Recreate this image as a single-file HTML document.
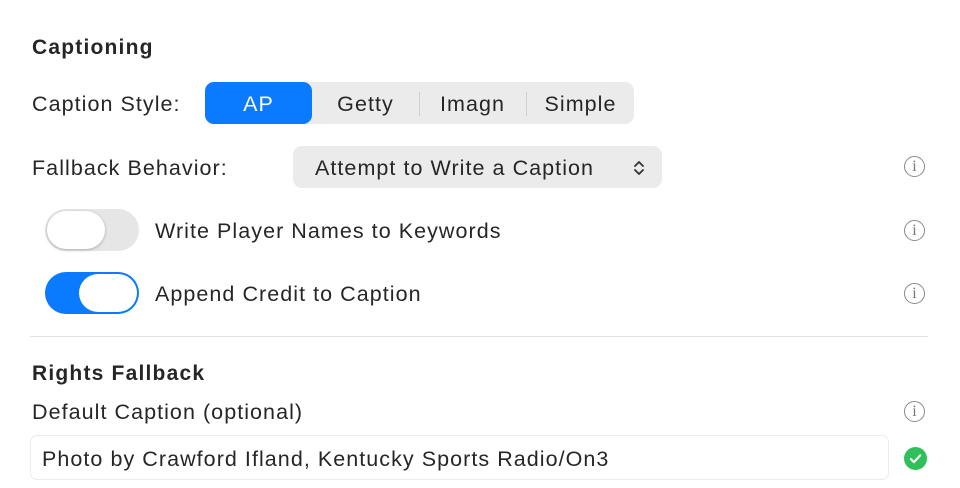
<!DOCTYPE html><html><head><meta charset="utf-8"><style>
body{margin:0;width:960px;height:488px;background:#fff;font-family:"Liberation Sans",sans-serif;color:#262626;position:relative;overflow:hidden}
.a{position:absolute;white-space:nowrap}
.t{font-size:21.5px;line-height:24px;letter-spacing:1.05px}
.b{font-weight:bold;font-size:21px;letter-spacing:1.2px}
.info{position:absolute;width:19px;height:19px;border:1.6px solid #8a8a8a;border-radius:50%;font-family:"Liberation Serif",serif;font-size:16px;line-height:19px;text-align:center;color:#777}
</style></head><body>
<div class="a b" style="left:32px;top:36px">Captioning</div>
<div class="a t" style="left:32px;top:92px">Caption Style:</div>
<div class="a" style="left:205px;top:82px;width:429px;height:42px;background:#ebebeb;border-radius:9px"></div>
<div class="a" style="left:205px;top:82px;width:107px;height:42px;background:#0a7aff;border-radius:9px"></div>
<div class="a t" style="left:205px;top:92px;width:107px;text-align:center;color:#fff">AP</div>
<div class="a t" style="left:312px;top:92px;width:107px;text-align:center">Getty</div>
<div class="a" style="left:419px;top:92px;width:1px;height:24px;background:#d0d0d0"></div>
<div class="a t" style="left:420px;top:92px;width:105px;text-align:center">Imagn</div>
<div class="a" style="left:526px;top:92px;width:1px;height:24px;background:#d0d0d0"></div>
<div class="a t" style="left:527px;top:92px;width:107px;text-align:center">Simple</div>

<div class="a t" style="left:32px;top:156px">Fallback Behavior:</div>
<div class="a" style="left:293px;top:146px;width:369px;height:42px;background:#ebebeb;border-radius:9px"></div>
<div class="a t" style="left:315px;top:156px">Attempt to Write a Caption</div>
<svg class="a" style="left:632px;top:158px" width="14" height="20" viewBox="0 0 14 20"><path d="M3 8l4-4 4 4M3 12l4 4 4-4" fill="none" stroke="#333" stroke-width="1.8" stroke-linecap="round" stroke-linejoin="round"/></svg>
<div class="info" style="left:904px;top:156px">i</div>

<div class="a" style="left:45px;top:209px;width:94px;height:42px;background:#e6e6e6;border-radius:21px"></div>
<div class="a" style="left:47px;top:211px;width:58px;height:38px;background:#fff;border-radius:19px;box-shadow:0 1px 3px rgba(0,0,0,.25)"></div>
<div class="a t" style="left:155px;top:219px">Write Player Names to Keywords</div>
<div class="info" style="left:904px;top:220px">i</div>

<div class="a" style="left:45px;top:272px;width:94px;height:42px;background:#0a7aff;border-radius:21px"></div>
<div class="a" style="left:79px;top:274px;width:58px;height:38px;background:#fff;border-radius:19px"></div>
<div class="a t" style="left:155px;top:282px">Append Credit to Caption</div>
<div class="info" style="left:904px;top:283px">i</div>

<div class="a" style="left:30px;top:336px;width:898px;height:1px;background:#e2e2e2"></div>
<div class="a b" style="left:32px;top:362px">Rights Fallback</div>
<div class="a t" style="left:32px;top:400px">Default Caption (optional)</div>
<div class="info" style="left:904px;top:401px">i</div>
<div class="a" style="left:30px;top:435px;width:857px;height:43px;border:1px solid #ececec;border-radius:7px"></div>
<div class="a t" style="left:42px;top:447px">Photo by Crawford Ifland, Kentucky Sports Radio/On3</div>
<svg class="a" style="left:904px;top:447px" width="23" height="23" viewBox="0 0 22 22"><circle cx="11" cy="11" r="11" fill="#30c05a"/><path d="M6.5 11.5l3 3 6-6.5" fill="none" stroke="#fff" stroke-width="2" stroke-linecap="round" stroke-linejoin="round"/></svg>
</body></html>
